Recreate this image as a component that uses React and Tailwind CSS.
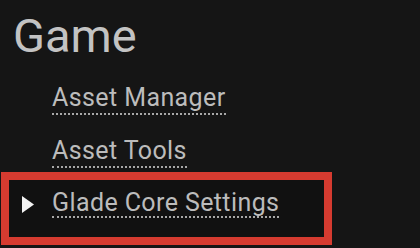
export default function App() {
    const linkClass =
        "inline-block border-b-2 border-dotted border-[#a8a8a8] leading-[26px] tracking-[0.4px]";

    return (
        <div className="w-[420px] h-[248px] overflow-hidden bg-[#151515] text-[#bcbcbc] font-['Roboto','Liberation_Sans',sans-serif]">
            <div className="pl-[13px] pt-[13px] text-[47px] leading-[46px] text-[#c3c3c3]">
                Game
            </div>

            <div className="flex flex-col text-[25px] pl-[52px] pt-[26px] gap-[23px]">
                <div className="flex">
                    <span className={linkClass + " pb-[2px]"}>Asset Manager</span>
                </div>
                <div className="flex">
                    <span className={linkClass + " pb-[2px]"}>Asset Tools</span>
                </div>
            </div>

            <div className="mt-[4px] ml-[1px] w-[331px] h-[73px] border-8 border-[#d63b30] bg-[#111111] flex items-start pt-[10px] text-[25px]">
                <svg
                    className="ml-[13px] mr-[18px] mt-[6px] shrink-0"
                    width="12"
                    height="17"
                    viewBox="0 0 12 17"
                >
                    <polygon points="0,0 12,8.5 0,17" fill="#f2f2f2" />
                </svg>
                <span className={linkClass}>Glade Core Settings</span>
            </div>
        </div>
    );
}
